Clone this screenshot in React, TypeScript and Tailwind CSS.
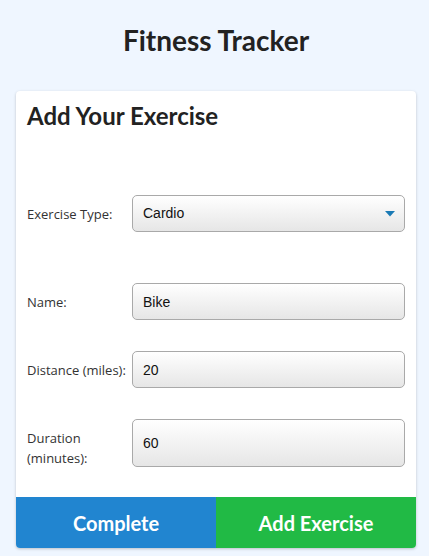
import { useState } from "react"

const inputClass =
  "w-full rounded-[5px] border border-[#a9a9a9] bg-gradient-to-b from-white to-[#e6e6e6] px-[10px] text-[14px] text-[#111] outline-none [font-family:'Liberation_Sans',Arial,sans-serif]"

function Row({
  label,
  children,
  mt,
  labelClass = "",
}: {
  label: React.ReactNode
  children: React.ReactNode
  mt: string
  labelClass?: string
}) {
  return (
    <div className={`flex items-center ${mt}`}>
      <label
        className={`w-[105px] shrink-0 text-[13px] leading-[20px] text-[#333] [font-family:'Open_Sans',sans-serif] ${labelClass}`}
      >
        {label}
      </label>
      <div className="flex-1">{children}</div>
    </div>
  )
}

export default function App() {
  const [type, setType] = useState("Cardio")
  const [name, setName] = useState("Bike")
  const [distance, setDistance] = useState("20")
  const [duration, setDuration] = useState("60")

  return (
    <div className="min-h-[556px] bg-[#eff6ff] pl-4 pr-[13px] pt-[24px] [font-family:Lato,sans-serif]">
      <h1 className="text-center text-[28px] font-bold leading-[32px] text-[#222]">Fitness Tracker</h1>

      {/* Card */}
      <div className="mt-[35px] overflow-hidden rounded-[4px] bg-white shadow-[0_1px_3px_rgba(0,0,0,0.22)]">
        <div className="px-[11px] pb-[30px] pt-[9px]">
          <h2 className="text-[24px] font-bold leading-[32px] text-[#222]">Add Your Exercise</h2>

          <Row label="Exercise Type:" mt="mt-[63px]">
            <div className="relative">
              <select
                value={type}
                onChange={(e) => setType(e.target.value)}
                className={`${inputClass} h-[37px] appearance-none`}
              >
                <option>Cardio</option>
                <option>Resistance</option>
              </select>
              <svg className="pointer-events-none absolute right-[10px] top-[16px]" width="10" height="6" viewBox="0 0 10 6">
                <path d="M0 0h10L5 5.5z" fill="#1a7ab5" />
              </svg>
            </div>
          </Row>

          <Row label="Name:" mt="mt-[51px]">
            <input value={name} onChange={(e) => setName(e.target.value)} className={`${inputClass} h-[37px]`} />
          </Row>

          <Row label="Distance (miles):" mt="mt-[31px]">
            <input value={distance} onChange={(e) => setDistance(e.target.value)} className={`${inputClass} h-[37px]`} />
          </Row>

          <Row
            label={
              <>
                Duration
                <br />
                (minutes):
              </>
            }
            mt="mt-[31px]"
            labelClass="translate-y-[5px]"
          >
            <input value={duration} onChange={(e) => setDuration(e.target.value)} className={`${inputClass} h-[48px]`} />
          </Row>
        </div>

        <div className="flex">
          <button className="h-[51px] flex-1 bg-[#2185d0] text-[20px] font-bold text-white">Complete</button>
          <button className="h-[51px] flex-1 bg-[#21ba45] text-[20px] font-bold text-white">Add Exercise</button>
        </div>
      </div>
    </div>
  )
}
